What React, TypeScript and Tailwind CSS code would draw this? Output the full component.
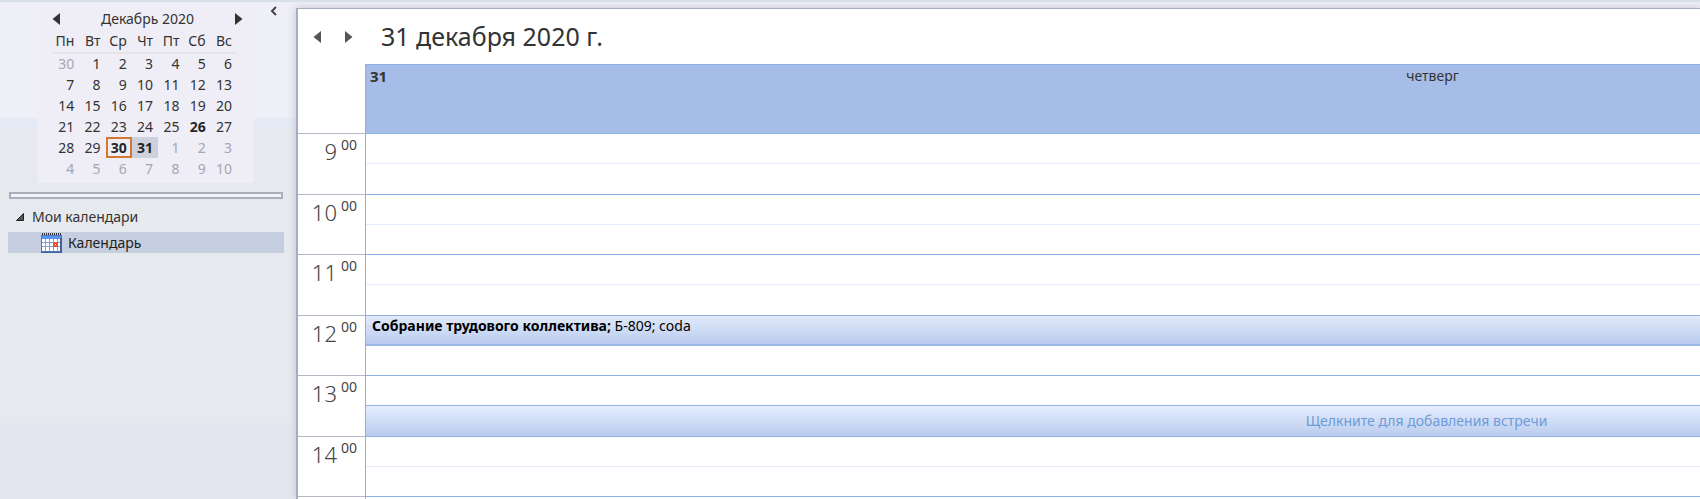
type Day = {
  label: number;
  muted?: boolean;
  bold?: boolean;
  today?: boolean;
  selected?: boolean;
};

const weekDays = ['Пн', 'Вт', 'Ср', 'Чт', 'Пт', 'Сб', 'Вс'];

const busyDays = [26, 30, 31];

// 30 November 2020 - 10 January 2021
const days: Day[] = [
  { label: 30, muted: true },
  ...Array.from({ length: 31 }, (_, i) => ({
    label: i + 1,
    bold: busyDays.includes(i + 1),
    today: i + 1 === 30,
    selected: i + 1 === 31
  })),
  ...Array.from({ length: 10 }, (_, i) => ({ label: i + 1, muted: true }))
];

const weeks = Array.from({ length: 6 }, (_, i) => days.slice(i * 7, i * 7 + 7));

const hours = [9, 10, 11, 12, 13, 14];

function dayClass(day: Day) {
  if (day.today) return 'font-bold outline-2 -outline-offset-2 outline-[#d5782f] text-[#262626]';
  if (day.selected) return 'font-bold bg-[#ccd1dd] text-[#262626]';
  if (day.bold) return 'font-bold text-[#262626]';
  if (day.muted) return 'text-[#a5a7b0]';
  return 'text-[#333]';
}

function Arrow({ left }: { left?: boolean }) {
  return (
    <svg viewBox="0 0 8 12" className="h-3 w-2" fill="currentColor">
      <path d={left ? 'M8 0v12L0.500 6z' : 'M0 0v12L7.500 6z'} />
    </svg>
  );
}

function CalendarIcon() {
  return (
    <svg viewBox="0 0 21 20" className="h-5 w-[21px]" shapeRendering="crispEdges">
      <path d="M0 2h21v18H0z" fill="#4a76c4" />
      <path d="M1 3h19v3H1z" fill="#5b93f5" />
      <path d="M1 6h18v12H1z" fill="#fff" />
      <path d="M1 1h19" stroke="#333" strokeWidth="2" strokeDasharray="1 1" />
      <path d="M1 9.500h18M1 13.500h18M4.500 6v12M8.500 6v12M12.500 6v12M16.500 6v12" stroke="#7ba0e6" />
      <path d="M12 9h5v5h-5z" fill="#f0502c" />
      <path d="M14 11h1v1h-1z" fill="#fff" />
      <path d="M0 19h21v1H0zM19 5h2v14h-2z" fill="#3f629c" />
    </svg>
  );
}

function MiniCalendar() {
  return (
    <div className="ml-[38px] mt-[6px] h-[175px] w-[216px] bg-[#efeef7] text-sm leading-5 text-[#333]">
      <div className="flex items-center justify-between pl-[14px] pr-[11px] pt-[1px]">
        <button aria-label="Предыдущий месяц"><Arrow left /></button>
        <span>Декабрь 2020</span>
        <button aria-label="Следующий месяц"><Arrow /></button>
      </div>
      <table className="ml-[15px] w-[184px] table-fixed border-collapse text-right">
        <thead>
          <tr className="h-6 border-b-2 border-[#e5e5e8]">
            {weekDays.map((name) => (
              <th key={name} className="p-0 pr-[5px] font-normal">{name}</th>
            ))}
          </tr>
        </thead>
        <tbody>
          {weeks.map((week, i) => (
            <tr key={i} className="h-[21px]">
              {week.map((day, j) => (
                <td key={j} className={`p-0 pr-[5px] ${dayClass(day)}`}>{day.label}</td>
              ))}
            </tr>
          ))}
        </tbody>
      </table>
    </div>
  );
}

function Sidebar() {
  return (
    <aside className="relative w-[296px] shrink-0 bg-[linear-gradient(#efeff8_0,#efeff8_114px,#e4e9f5_118px,#e4e9f5_124px,#e6eaee_126px,#e6eaee_421px,#e6e6f0_421px)]">
      <MiniCalendar />
      <button aria-label="Свернуть область навигации" className="absolute left-[269px] top-1 text-[#444]">
        <svg viewBox="0 0 8 10" className="h-[10px] w-2" fill="none" stroke="currentColor" strokeWidth="2">
          <path d="M7 1L3 5l4 4" />
        </svg>
      </button>
      <div className="ml-[9px] mt-[9px] h-[7px] w-[274px] border-2 border-[#acaebb] bg-[#f3f3fa]" />
      <button className="mt-[7px] flex h-[21px] items-center gap-2 pl-4 text-sm text-[#333]">
        <svg viewBox="0 0 8 8" className="h-2 w-2">
          <path d="M7.500 0.500v7h-7z" fill="#555" stroke="#222" />
        </svg>
        Мои календари
      </button>
      <button className="ml-2 mt-[5px] flex h-[21px] w-[276px] items-center gap-[6px] bg-[#c6cfdf] pl-[33px] text-sm text-[#222]">
        <CalendarIcon />
        Календарь
      </button>
    </aside>
  );
}

function HourSlots({ hour }: { hour: number }) {
  return (
    <div className="flex grow flex-col border-l border-t border-[#8fb0e2]">
      {hour === 12 ? (
        <button className="h-[30px] border-b-2 border-[#9bb7e4] bg-linear-to-b from-[#e2eafb] to-[#b9ccee] pl-[6px] text-left text-sm text-black">
          <span className="block h-full">
            <b>Собрание трудового коллектива;</b> Б-809; coda
          </span>
        </button>
      ) : (
        <div className={`h-[30px] border-b ${hour === 13 ? 'border-[#8fb0e2]' : 'border-[#e1ecf8]'}`} />
      )}
      {hour === 13 && (
        <button className="grow bg-linear-to-b from-[#e6edfd] to-[#b9ccee] pr-3 text-sm text-[#6f9bd8]">
          Щелкните для добавления встречи
        </button>
      )}
    </div>
  );
}

export default function App() {
  return (
    <div className="flex h-screen flex-col overflow-hidden border-t-2 border-[#d9dfe8] bg-[#efeff8] font-['Noto_Sans','Open_Sans',sans-serif]">
      <div className="flex min-h-0 grow">
        <Sidebar />
        <main className="relative mt-[6px] min-w-0 grow overflow-hidden border-l-2 border-t border-[#a5afbb] bg-white shadow-[0_0_8px_#c4bfd2]">
          <div className="flex h-[55px] items-center pl-[15px] text-[#555]">
            <button aria-label="Предыдущий день" className="mr-6"><Arrow left /></button>
            <button aria-label="Следующий день" className="mr-7"><Arrow /></button>
            <h1 className="text-[25px] text-[#333]">31 декабря 2020 г.</h1>
          </div>
          {/* the day column runs past the right edge of the window */}
          <div className="w-[157%]">
            <div className="flex h-[69px]">
              <div className="w-[67px] shrink-0" />
              <div className="relative grow border-l border-t border-[#8fb0e2] bg-[#a5bde7] text-center text-sm leading-[22px] text-[#333]">
                <b className="absolute left-1 top-0 text-[15px]">31</b>
                четверг
              </div>
            </div>
            {hours.map((hour) => (
              <div key={hour} className="flex odd:h-[60px] even:h-[61px]">
                <div className="flex w-[67px] shrink-0 items-start justify-end gap-1 border-t border-[#b3b8c4] pr-2 text-[#444]">
                  <span className="pt-[2px] text-[22px] font-light leading-[30px]">{hour}</span>
                  <span className="pt-[1px] text-sm">00</span>
                </div>
                <HourSlots hour={hour} />
              </div>
            ))}
            <div className="flex h-4">
              <div className="w-[67px] shrink-0 border-t border-[#b3b8c4]" />
              <div className="grow border-l border-t border-[#8fb0e2]" />
            </div>
          </div>
        </main>
      </div>
    </div>
  );
}
